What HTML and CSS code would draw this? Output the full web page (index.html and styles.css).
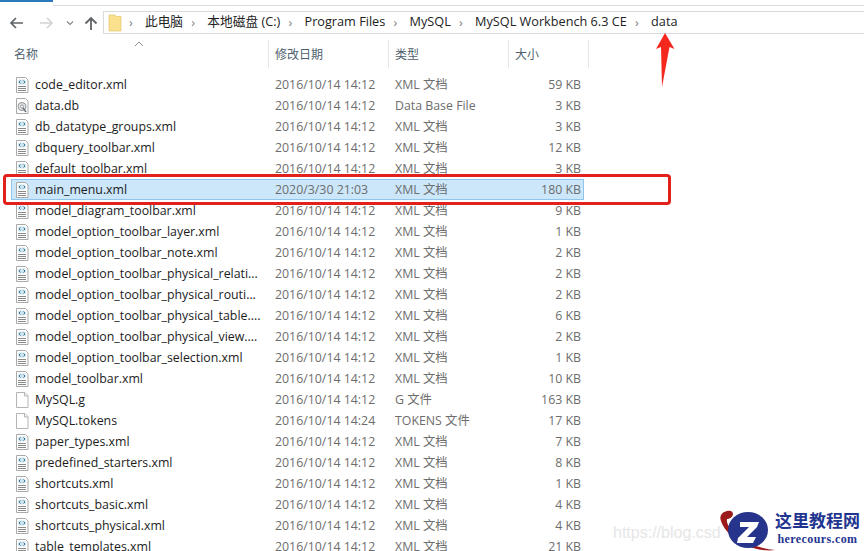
FILE: index.html
```html
<!DOCTYPE html>
<html lang="zh">
<head>
<meta charset="utf-8">
<title>data</title>
<link rel="stylesheet" href="styles.css">
</head>
<body>
<svg class="defs" width="0" height="0">
  <symbol id="xml" viewBox="0 0 16 16">
    <path d="M2.500 .5h9l2.500 2.500v12.500h-11.500z" fill="#fff" stroke="#a9a9a9"/>
    <rect x="4" y="2.500" width="8" height="5" rx="2" fill="#cfe3ee"/>
    <path d="M6.500 3.500l-1.500 1.500 1.500 1.500M9.500 3.500l1.500 1.500-1.500 1.500" fill="none" stroke="#3a7f9c"/>
    <path d="M4 9.500h8M4 11.500h8M4 13.500h8" stroke="#8a8a8a"/>
  </symbol>
  <symbol id="db" viewBox="0 0 16 16">
    <path d="M2.500 .5h9l2.500 2.500v12.500h-11.500z" fill="#fff" stroke="#a9a9a9"/>
    <circle cx="8" cy="8.500" r="4" fill="#e4e8ea" stroke="#8d9296"/>
    <circle cx="8" cy="8.500" r="1.500" fill="#fff" stroke="#8d9296"/>
    <path d="M9 10l3 4" stroke="#6f7478" stroke-width="1.500"/>
  </symbol>
  <symbol id="blank" viewBox="0 0 16 16">
    <path d="M2.500 .5h8.500l3 3v12h-11.500z" fill="#fff" stroke="#b4b4b4"/>
    <path d="M10.500 .5v3.500h3.500" fill="#f1f1f1" stroke="#b4b4b4"/>
  </symbol>
</svg>

<div class="window">
  <div class="ribbon"><div class="ribbon-tab"></div><div class="ribbon-line"></div></div>

  <nav class="navbar">
    <div class="nav-buttons">
      <svg class="nav-icon" width="18" height="14" viewBox="0 0 18 14"><path d="M15 7H3M8 2L3 7l5 5" fill="none" stroke="#5f6468" stroke-width="1.700"/></svg>
      <svg class="nav-icon" width="18" height="14" viewBox="0 0 18 14"><path d="M2 7h12M9 2l5 5-5 5" fill="none" stroke="#d2d4d6" stroke-width="1.700"/></svg>
      <svg class="nav-icon small" width="10" height="14" viewBox="0 0 10 14"><path d="M2 5.500l3 3 3-3" fill="none" stroke="#85898c" stroke-width="1.200"/></svg>
      <svg class="nav-icon up" width="14" height="16" viewBox="0 0 14 16"><path d="M7 15V3M1.500 8.500L7 3l5.500 5.500" fill="none" stroke="#5f6468" stroke-width="1.800"/></svg>
    </div>
    <div class="address">
      <svg class="folder" width="14" height="18" viewBox="0 0 14 18"><path d="M1 1h6l1 1.500h5V17H1z" fill="#fbe08e" stroke="#e3c670" stroke-width=".7"/></svg>
      <span class="sep">›</span><span class="crumb">此电脑</span>
      <span class="sep">›</span><span class="crumb">本地磁盘 (C:)</span>
      <span class="sep">›</span><span class="crumb">Program Files</span>
      <span class="sep">›</span><span class="crumb">MySQL</span>
      <span class="sep">›</span><span class="crumb">MySQL Workbench 6.3 CE</span>
      <span class="sep">›</span><span class="crumb">data</span>
    </div>
  </nav>

  <div class="head">
    <div class="col-head name-head">名称<svg class="sort" width="10" height="6" viewBox="0 0 10 6"><path d="M1 5l4-4 4 4" fill="none" stroke="#8a8f93"/></svg></div>
    <div class="col-head">修改日期</div>
    <div class="col-head">类型</div>
    <div class="col-head last">大小</div>
  </div>

  <div class="list">
    <div class="row"><div class="name"><svg class="ficon"><use href="#xml"/></svg>code_editor.xml</div><div class="cell">2016/10/14 14:12</div><div class="cell">XML 文档</div><div class="size">59 KB</div></div>
    <div class="row"><div class="name"><svg class="ficon"><use href="#db"/></svg>data.db</div><div class="cell">2016/10/14 14:12</div><div class="cell">Data Base File</div><div class="size">3 KB</div></div>
    <div class="row"><div class="name"><svg class="ficon"><use href="#xml"/></svg>db_datatype_groups.xml</div><div class="cell">2016/10/14 14:12</div><div class="cell">XML 文档</div><div class="size">3 KB</div></div>
    <div class="row"><div class="name"><svg class="ficon"><use href="#xml"/></svg>dbquery_toolbar.xml</div><div class="cell">2016/10/14 14:12</div><div class="cell">XML 文档</div><div class="size">12 KB</div></div>
    <div class="row"><div class="name"><svg class="ficon"><use href="#xml"/></svg>default_toolbar.xml</div><div class="cell">2016/10/14 14:12</div><div class="cell">XML 文档</div><div class="size">3 KB</div></div>
    <div class="row selected"><div class="name"><svg class="ficon"><use href="#xml"/></svg>main_menu.xml</div><div class="cell">2020/3/30 21:03</div><div class="cell">XML 文档</div><div class="size">180 KB</div></div>
    <div class="row"><div class="name"><svg class="ficon"><use href="#xml"/></svg>model_diagram_toolbar.xml</div><div class="cell">2016/10/14 14:12</div><div class="cell">XML 文档</div><div class="size">9 KB</div></div>
    <div class="row"><div class="name"><svg class="ficon"><use href="#xml"/></svg>model_option_toolbar_layer.xml</div><div class="cell">2016/10/14 14:12</div><div class="cell">XML 文档</div><div class="size">1 KB</div></div>
    <div class="row"><div class="name"><svg class="ficon"><use href="#xml"/></svg>model_option_toolbar_note.xml</div><div class="cell">2016/10/14 14:12</div><div class="cell">XML 文档</div><div class="size">2 KB</div></div>
    <div class="row"><div class="name"><svg class="ficon"><use href="#xml"/></svg>model_option_toolbar_physical_relati...</div><div class="cell">2016/10/14 14:12</div><div class="cell">XML 文档</div><div class="size">2 KB</div></div>
    <div class="row"><div class="name"><svg class="ficon"><use href="#xml"/></svg>model_option_toolbar_physical_routi...</div><div class="cell">2016/10/14 14:12</div><div class="cell">XML 文档</div><div class="size">2 KB</div></div>
    <div class="row"><div class="name"><svg class="ficon"><use href="#xml"/></svg>model_option_toolbar_physical_table....</div><div class="cell">2016/10/14 14:12</div><div class="cell">XML 文档</div><div class="size">6 KB</div></div>
    <div class="row"><div class="name"><svg class="ficon"><use href="#xml"/></svg>model_option_toolbar_physical_view....</div><div class="cell">2016/10/14 14:12</div><div class="cell">XML 文档</div><div class="size">2 KB</div></div>
    <div class="row"><div class="name"><svg class="ficon"><use href="#xml"/></svg>model_option_toolbar_selection.xml</div><div class="cell">2016/10/14 14:12</div><div class="cell">XML 文档</div><div class="size">1 KB</div></div>
    <div class="row"><div class="name"><svg class="ficon"><use href="#xml"/></svg>model_toolbar.xml</div><div class="cell">2016/10/14 14:12</div><div class="cell">XML 文档</div><div class="size">10 KB</div></div>
    <div class="row"><div class="name"><svg class="ficon"><use href="#blank"/></svg>MySQL.g</div><div class="cell">2016/10/14 14:12</div><div class="cell">G 文件</div><div class="size">163 KB</div></div>
    <div class="row"><div class="name"><svg class="ficon"><use href="#blank"/></svg>MySQL.tokens</div><div class="cell">2016/10/14 14:24</div><div class="cell">TOKENS 文件</div><div class="size">17 KB</div></div>
    <div class="row"><div class="name"><svg class="ficon"><use href="#xml"/></svg>paper_types.xml</div><div class="cell">2016/10/14 14:12</div><div class="cell">XML 文档</div><div class="size">7 KB</div></div>
    <div class="row"><div class="name"><svg class="ficon"><use href="#xml"/></svg>predefined_starters.xml</div><div class="cell">2016/10/14 14:12</div><div class="cell">XML 文档</div><div class="size">8 KB</div></div>
    <div class="row"><div class="name"><svg class="ficon"><use href="#xml"/></svg>shortcuts.xml</div><div class="cell">2016/10/14 14:12</div><div class="cell">XML 文档</div><div class="size">1 KB</div></div>
    <div class="row"><div class="name"><svg class="ficon"><use href="#xml"/></svg>shortcuts_basic.xml</div><div class="cell">2016/10/14 14:12</div><div class="cell">XML 文档</div><div class="size">4 KB</div></div>
    <div class="row"><div class="name"><svg class="ficon"><use href="#xml"/></svg>shortcuts_physical.xml</div><div class="cell">2016/10/14 14:12</div><div class="cell">XML 文档</div><div class="size">4 KB</div></div>
    <div class="row"><div class="name"><svg class="ficon"><use href="#xml"/></svg>table_templates.xml</div><div class="cell">2016/10/14 14:12</div><div class="cell">XML 文档</div><div class="size">21 KB</div></div>
  </div>

  <div class="red-box"></div>
  <svg class="arrow" width="19" height="54" viewBox="0 0 19 54"><path d="M9 0L18.500 16 13.500 14 6 54 5 14 0 16z" fill="#f5281e"/></svg>

  <div class="wm-url">https://blog.csd</div>
  <div class="wm-logo">
    <svg class="wm-mark" width="60" height="48" viewBox="0 0 60 48">
      <path d="M9 5C4 6 1 10 3 15 6 25 18 36 32 41 40 44 50 45 57 44 44 43 30 38 20 30 12 24 8 17 9 13 11 13 15 11 15 8 15 5 12 4 9 5z" fill="#9c1a1a"/>
      <ellipse cx="30" cy="24" rx="20" ry="18" fill="#26348c"/>
      <path d="M22 16h19l-2 5-10 10h9l-3 6H19l1-5 11-11h-9z" fill="#fff"/>
    </svg>
    <div class="wm-text">
      <div class="wm-cn">这里教程网</div>
      <div class="wm-en">herecours.com</div>
    </div>
  </div>
</div>
</body>
</html>
```
FILE: styles.css
```css
* { box-sizing: border-box; }
html, body { margin: 0; padding: 0; background: #fff; }
.defs { position: absolute; }
.window {
  position: relative;
  width: 864px;
  height: 551px;
  overflow: hidden;
  background: #fff;
  font-family: "Open Sans", "Noto Sans CJK SC", sans-serif;
  font-size: 12.350px;
  color: #1f1f1f;
}
.ribbon { display: flex; height: 6px; }
.ribbon-tab { width: 53px; height: 2px; background: #2b79bd; }
.ribbon-line { flex: 1; height: 6px; border-bottom: 1px solid #dcdcdc; }

.navbar { display: flex; align-items: center; height: 23px; margin-top: 5px; }
.nav-buttons { display: flex; align-items: center; width: 103px; padding-left: 8px; gap: 12px; }
.nav-icon.small { margin-left: -3px; }
.nav-icon.up { margin-left: -3px; }
.address {
  flex: 1;
  height: 23px;
  display: flex;
  align-items: center;
  padding-left: 4px;
  border: 1px solid #dadada;
  border-right: 0;
  font-size: 12.700px;
  line-height: 17px;
  color: #222;
}
.folder { margin-right: 7px; }
.sep { width: 8px; margin-right: 8px; color: #808080; line-height: 1; position: relative; }
.crumb { margin-right: 8.300px; white-space: nowrap; position: relative; top: -1px; }

.head {
  display: grid;
  grid-template-columns: 269px 120px 120px 80px;
  height: 28px;
  margin-top: 6px;
}
.col-head {
  position: relative;
  display: flex;
  align-items: center;
  padding-left: 6px;
  border-right: 1px solid #e6e6e6;
  font-size: 12px;
  color: #4f5f6e;
}
.name-head { padding-left: 14px; }
.sort { position: absolute; left: 134px; top: 1px; }

.list { margin-top: 6px; }
.row {
  display: grid;
  grid-template-columns: 269px 120px 120px 72px;
  width: 584px;
  height: 21px;
  line-height: 17px;
  align-items: center;
  color: #6d6d6d;
}
.row.selected {
  margin-left: 11px;
  width: 573px;
  grid-template-columns: 258px 120px 120px 72px;
  background: #cce6fa;
  box-shadow: inset 0 0 0 1px #8fc4ec;
}
.row.selected .name { padding-left: 3px; }
.name {
  display: flex;
  align-items: center;
  padding-left: 14px;
  color: #1c1c1c;
  white-space: nowrap;
  overflow: hidden;
}
.ficon { width: 16px; height: 16px; margin-right: 5px; flex: none; }
.cell { padding-left: 6px; white-space: nowrap; }
.size { text-align: right; white-space: nowrap; }

.red-box {
  position: absolute;
  left: 3px;
  top: 174px;
  width: 668px;
  height: 31px;
  border: 3px solid #e3211c;
  border-radius: 4px;
}
.arrow { position: absolute; left: 656px; top: 33px; }

.wm-url {
  position: absolute;
  left: 613px;
  top: 524px;
  font-family: "Liberation Sans", sans-serif;
  font-size: 16px;
  color: #e6e6e6;
}
.wm-logo {
  position: absolute;
  left: 718px;
  top: 506px;
  display: flex;
  align-items: flex-start;
}
.wm-mark { flex: none; }
.wm-text { margin-left: -3px; padding-top: 3px; display: flex; flex-direction: column; align-items: center; }
.wm-cn {
  font-family: "Noto Sans CJK SC", sans-serif;
  font-weight: 700;
  font-size: 17px;
  line-height: 22px;
  color: #1f3590;
}
.wm-en {
  font-family: "Liberation Serif", serif;
  font-weight: 700;
  font-size: 12px;
  letter-spacing: .4px;
  line-height: 16px;
  color: #1f3590;
}
```
